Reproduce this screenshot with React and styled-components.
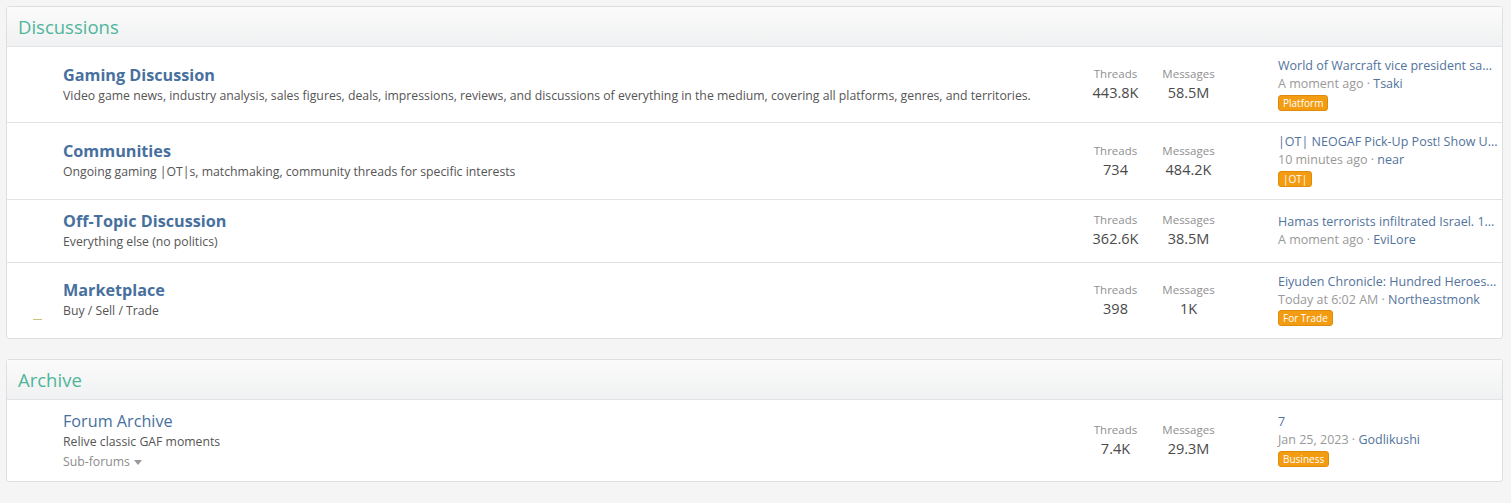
import React from "react";
import styled, { createGlobalStyle } from "styled-components";

const Global = createGlobalStyle`
  html, body { margin: 0; padding: 0; background: #f5f5f5; }
  body { font-family: "Open Sans", "Noto Sans", sans-serif; color: #505050; }
  * { box-sizing: border-box; }
`;

const Page = styled.div`
  padding: 6px 8px 20px 6px;
  display: flex;
  flex-direction: column;
  gap: 20px;
`;

const Block = styled.section`
  background: #fff;
  border: 1px solid #dfdfdf;
  border-radius: 3px;
`;

const BlockHeader = styled.h2`
  margin: 0;
  height: 40px;
  display: flex;
  align-items: center;
  padding: 0 11px;
  font-size: 18.5px;
  font-weight: 400;
  color: #4fb59b;
  background: linear-gradient(to bottom, #fbfbfb, #f0f1f2);
  border-bottom: 1px solid #e3e3e3;
`;

const Row = styled.div`
  display: flex;
  align-items: center;
  padding: 10px 12px 10px 0;
  & + & { border-top: 1px solid #e3e3e3; }
`;

const IconCell = styled.div`
  width: 56px;
  align-self: stretch;
  position: relative;
  flex-shrink: 0;
`;

const BrokenMark = styled.span`
  position: absolute;
  left: 26px;
  bottom: 8px;
  width: 9px;
  height: 1px;
  background: #c9c27a;
`;

const Main = styled.div`
  flex: 1;
  min-width: 0;
  display: flex;
  flex-direction: column;
`;

const Title = styled.a`
  font-size: 16.2px;
  line-height: 22px;
  font-weight: ${(p) => (p.$bold ? 700 : 400)};
  color: #47709e;
  text-decoration: none;
`;

const Desc = styled.div`
  font-size: 12.25px;
  line-height: 20px;
  color: #555;
`;

const SubForums = styled.div`
  font-size: 12.25px;
  line-height: 19px;
  color: #8c8c8c;
  display: flex;
  align-items: center;
  gap: 4px;
`;

const Caret = styled.span`
  width: 0;
  height: 0;
  border-left: 4px solid transparent;
  border-right: 4px solid transparent;
  border-top: 5px solid #999;
  margin-top: 1px;
`;

const Stats = styled.div`
  display: flex;
  width: 146px;
  margin: 0 53px 0 20px;
  flex-shrink: 0;
`;

const Stat = styled.dl`
  margin: 0;
  width: 73px;
  text-align: center;
  display: flex;
  flex-direction: column;
`;

const StatLabel = styled.dt`
  font-size: 11.5px;
  line-height: 16px;
  color: #8f8f8f;
`;

const StatValue = styled.dd`
  margin: 0;
  font-size: 14.5px;
  line-height: 21px;
  color: #4a4a4a;
`;

const LastPost = styled.div`
  width: 212px;
  flex-shrink: 0;
  display: flex;
  flex-direction: column;
`;

const LastTitle = styled.a`
  font-size: 12.5px;
  line-height: 18px;
  color: #52739c;
  text-decoration: none;
  white-space: nowrap;
`;

const Meta = styled.div`
  font-size: 12.5px;
  line-height: 18px;
  color: #999;
  white-space: nowrap;
`;

const User = styled.a`
  color: #52739c;
  text-decoration: none;
`;

const BadgeLine = styled.div`
  height: 19.4px;
  display: flex;
  align-items: center;
`;

const Badge = styled.span`
  display: inline-block;
  font-size: 10px;
  line-height: 14px;
  padding: 0 4px;
  color: #fff;
  background: #f39c12;
  border: 1px solid #dd8c0c;
  border-radius: 3px;
`;

const discussions = [
  {
    title: "Gaming Discussion",
    desc: "Video game news, industry analysis, sales figures, deals, impressions, reviews, and discussions of everything in the medium, covering all platforms, genres, and territories.",
    threads: "443.8K",
    messages: "58.5M",
    last: "World of Warcraft vice president sa...",
    when: "A moment ago",
    user: "Tsaki",
    badge: "Platform",
  },
  {
    title: "Communities",
    desc: "Ongoing gaming |OT|s, matchmaking, community threads for specific interests",
    threads: "734",
    messages: "484.2K",
    last: "|OT| NEOGAF Pick-Up Post! Show U...",
    when: "10 minutes ago",
    user: "near",
    badge: "|OT|",
  },
  {
    title: "Off-Topic Discussion",
    desc: "Everything else (no politics)",
    threads: "362.6K",
    messages: "38.5M",
    last: "Hamas terrorists infiltrated Israel. 1...",
    when: "A moment ago",
    user: "EviLore",
  },
  {
    title: "Marketplace",
    desc: "Buy / Sell / Trade",
    threads: "398",
    messages: "1K",
    last: "Eiyuden Chronicle: Hundred Heroes...",
    when: "Today at 6:02 AM",
    user: "Northeastmonk",
    badge: "For Trade",
    mark: true,
  },
];

function NodeRow({ n, bold = true, subforums = false }) {
  return (
    <Row>
      <IconCell>{n.mark && <BrokenMark />}</IconCell>
      <Main>
        <Title href="#" $bold={bold}>{n.title}</Title>
        <Desc>{n.desc}</Desc>
        {subforums && (
          <SubForums>
            Sub-forums <Caret />
          </SubForums>
        )}
      </Main>
      <Stats>
        <Stat>
          <StatLabel>Threads</StatLabel>
          <StatValue>{n.threads}</StatValue>
        </Stat>
        <Stat>
          <StatLabel>Messages</StatLabel>
          <StatValue>{n.messages}</StatValue>
        </Stat>
      </Stats>
      <LastPost>
        <LastTitle href="#">{n.last}</LastTitle>
        <Meta>
          {n.when} · <User href="#">{n.user}</User>
        </Meta>
        {n.badge && (
          <BadgeLine>
            <Badge>{n.badge}</Badge>
          </BadgeLine>
        )}
      </LastPost>
    </Row>
  );
}

export default function App() {
  return (
    <>
      <Global />
      <Page>
        <Block>
          <BlockHeader>Discussions</BlockHeader>
          {discussions.map((n) => (
            <NodeRow key={n.title} n={n} />
          ))}
        </Block>
        <Block>
          <BlockHeader>Archive</BlockHeader>
          <NodeRow
            bold={false}
            subforums
            n={{
              title: "Forum Archive",
              desc: "Relive classic GAF moments",
              threads: "7.4K",
              messages: "29.3M",
              last: "7",
              when: "Jan 25, 2023",
              user: "Godlikushi",
              badge: "Business",
            }}
          />
        </Block>
      </Page>
    </>
  );
}
